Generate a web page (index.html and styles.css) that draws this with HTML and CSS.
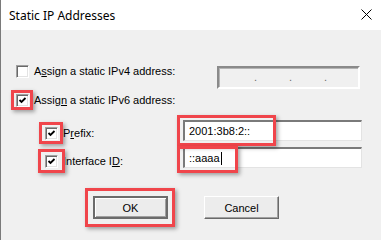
FILE: index.html
```html
<!DOCTYPE html>
<html>
<head>
<meta charset="utf-8">
<link rel="stylesheet" href="styles.css">
</head>
<body>
<div class="window">
  <div class="titlebar">
    <span class="title">Static IP Addresses</span>
    <svg class="close" width="11" height="11" viewBox="0 0 11 11"><path d="M0.5 0.5 L10.5 10.5 M10.5 0.5 L0.5 10.5" stroke="#000" stroke-width="1" fill="none"/></svg>
  </div>
  <div class="content">
    <div class="row r1">
      <label class="check wide"><span class="box"></span><span>A<u>s</u>sign a static IPv4 address:</span></label>
      <div class="ipv4"><span class="dot">.</span><span class="dot">.</span><span class="dot">.</span></div>
    </div>
    <div class="row r2">
      <label class="check"><span class="box"><svg width="9" height="9" viewBox="0 0 9 9"><path d="M1.5 4 L3.5 6 L7.5 2" stroke="#000" stroke-width="1.8" fill="none"/></svg></span><span>Assig<u>n</u> a static IPv6 address:</span></label>
    </div>
    <div class="row sub r3">
      <label class="check narrow"><span class="box cb3"><svg width="9" height="9" viewBox="0 0 9 9"><path d="M1.5 4 L3.5 6 L7.5 2" stroke="#000" stroke-width="1.8" fill="none"/></svg></span><span>P<u>r</u>efix:</span></label>
      <div class="field">2001:3b8:2::</div>
    </div>
    <div class="row sub r4">
      <label class="check narrow"><span class="box cb4"><svg width="9" height="9" viewBox="0 0 9 9"><path d="M1.5 4 L3.5 6 L7.5 2" stroke="#000" stroke-width="1.8" fill="none"/></svg></span><span>Interface I<u>D</u>:</span></label>
      <div class="field">::aaaa<span class="caret"></span></div>
    </div>
    <div class="buttons">
      <div class="btn default">OK</div>
      <div class="btn">Cancel</div>
    </div>
  </div>
  <div class="ann a1"></div>
  <div class="ann a2"></div>
  <div class="ann a3"></div>
  <div class="ann a4"></div>
  <div class="ann a5"></div>
  <div class="ann a6"></div>
</div>
</body>
</html>
```
FILE: styles.css
```css
html, body {
  margin: 0;
  padding: 0;
  background: #f0f0f0;
}
body {
  width: 381px;
  height: 240px;
  overflow: hidden;
  font-family: "Liberation Sans", Arial, sans-serif;
  font-size: 11px;
  color: #000;
}
.window {
  position: relative;
  width: 381px;
  height: 240px;
  box-sizing: border-box;
  border-left: 1px solid #7a7a7a;
  background: #f0f0f0;
}
.titlebar {
  height: 30px;
  background: #fff;
  display: flex;
  align-items: center;
  padding-left: 8px;
  padding-right: 9px;
}
.title {
  font-family: "Noto Sans", "Open Sans", sans-serif;
  font-size: 12px;
  color: #000;
  flex: 1;
}
.close {
  display: block;
  margin-top: -1px;
}
.content {
  padding-left: 15px;
}
.row {
  display: flex;
  align-items: flex-start;
}
.r1 { padding-top: 35px; }
.r2 { margin-top: 5px; }
.r3 { margin-top: 13px; }
.r4 { margin-top: 6px; }
.sub { padding-left: 29px; }
.check {
  display: flex;
  align-items: center;
  gap: 5px;
  height: 13px;
  line-height: 13px;
  white-space: nowrap;
}
.wide { width: 201px; }
.narrow { width: 138px; }
.r3 .check { margin-top: 7px; }
.r4 .check { margin-top: 8px; }
.box {
  width: 13px;
  height: 13px;
  box-sizing: border-box;
  background: #fff;
  border: 1px solid;
  border-color: #a0a0a0 #fff #fff #a0a0a0;
  box-shadow: inset 1px 1px #696969, inset -1px -1px #e3e3e3;
  display: flex;
  align-items: center;
  justify-content: center;
  flex: none;
}
.box svg { display: block; }
.ipv4 {
  margin-top: 1px;
  width: 143px;
  height: 23px;
  box-sizing: border-box;
  border: 2px solid;
  border-color: #8a8a8a #fff #fff #8a8a8a;
  box-shadow: inset 1px 1px #b4b4b4;
  background: #f0f0f0;
  display: flex;
  padding-left: 35px;
  line-height: 19px;
  color: #6d6d6d;
}
.dot {
  width: 3px;
  margin-right: 32px;
}
.field {
  width: 179px;
  height: 21px;
  box-sizing: border-box;
  background: #fff;
  border: 2px solid;
  border-color: #7a7a7a #e3e3e3 #e3e3e3 #7a7a7a;
  border-right-width: 1px;
  border-bottom-width: 1px;
  padding-left: 4px;
  line-height: 18px;
  display: flex;
  align-items: center;
}
.caret {
  display: inline-block;
  width: 1px;
  height: 13px;
  background: #000;
  margin-left: 1px;
}
.buttons {
  display: flex;
  margin-top: 28px;
  padding-left: 77px;
  gap: 36px;
}
.btn {
  width: 75px;
  height: 23px;
  box-sizing: border-box;
  background: #ececec;
  border: 1px solid;
  border-color: #fff #696969 #696969 #fff;
  box-shadow: inset -1px -1px #a0a0a0;
  display: flex;
  align-items: center;
  justify-content: center;
}
.btn.default {
  border: 2px solid #6b6b6b;
  box-shadow: inset 1px 1px #fff, inset -1px -1px #a0a0a0;
}
.ann {
  position: absolute;
  box-sizing: border-box;
  border: 3px solid #f0454b;
  box-shadow: 2px 2px 4px rgba(0, 0, 0, 0.35);
}
.a1 { left: 10px; top: 90px; width: 22px; height: 20px; }
.a2 { left: 38px; top: 122px; width: 24px; height: 22px; }
.a3 { left: 37px; top: 149px; width: 27px; height: 24px; }
.a4 { left: 176px; top: 115px; width: 99px; height: 31px; }
.a5 { left: 176px; top: 146px; width: 61px; height: 27px; }
.a6 { left: 84px; top: 188px; width: 90px; height: 39px; }
```
